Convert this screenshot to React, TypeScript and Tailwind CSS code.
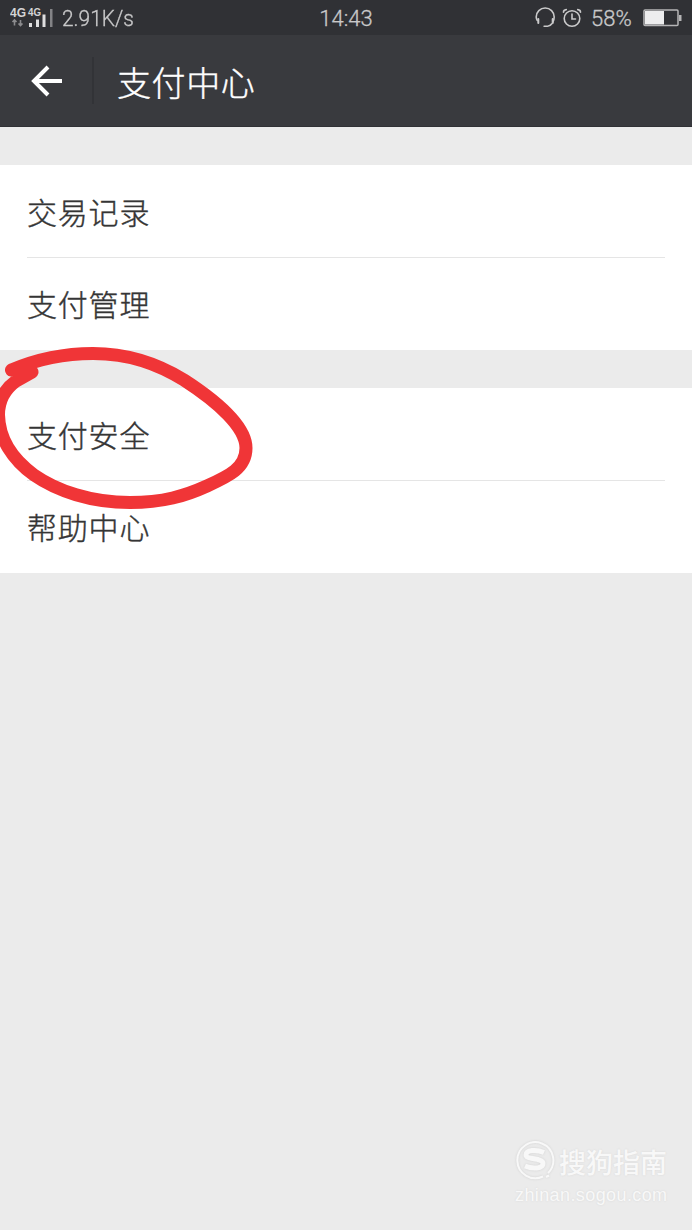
function StatusBar() {
  return (
    <div className="flex h-[35px] shrink-0 items-center bg-[#303135] text-[#c9c9ca]">
      <div className="flex w-[231px] items-center pl-[10px]">
        <svg width="44" height="24" viewBox="0 0 44 24" className="mt-[1px]">
          <g fill="#d4d4d5" fontFamily="Liberation Sans" fontWeight="700">
            <text x="0" y="11" fontSize="12.500" textLength="16" lengthAdjust="spacingAndGlyphs">4G</text>
            <text x="18" y="10" fontSize="10" textLength="13" lengthAdjust="spacingAndGlyphs">4G</text>
          </g>
          <path d="M4.500 19.500v-5M2.500 16l2-2 2 2M10.500 14v5M8.500 17.500l2 2 2-2" stroke="#8b8b8e" strokeWidth="1.600" fill="none" />
          <path d="M19 17h3v4h-3zM26 13.500h3v7.500h-3zM32.500 8.500h3v12.500h-3z" fill="#dededf" />
          <path d="M40 3h2.500v18h-2.500z" fill="#838386" />
        </svg>
        <span className="ml-[8px] mt-[2px] w-[72px] whitespace-nowrap font-['Roboto'] text-[22px] font-light leading-none [-webkit-text-stroke:0.3px]">
          <span className="inline-block origin-left scale-x-[0.95]">2.91K/s</span>
        </span>
      </div>
      <div className="w-[230px] pt-[2px] text-center font-['Roboto'] text-[22px] font-light leading-none [-webkit-text-stroke:0.3px]">
        14:43
      </div>
      <div className="flex flex-1 items-center pl-[73px]">
        <svg width="23" height="22" viewBox="0 0 23 22" fill="none" stroke="#c9c9ca" strokeWidth="1.600" strokeLinecap="round">
          <path d="M3.200 13.500A9 9 0 0 1 2.200 10a9 9 0 0 1 18 0c0 2-.6 3.700-1.400 5.100M17.800 16.800c-1.200 1.700-2.400 2.500-4.200 2.500h-3.500" />
          <path d="M4.300 12v4M18.700 12v4" strokeWidth="2" />
        </svg>
        <svg width="20" height="20" viewBox="0 0 20 20" fill="none" stroke="#c9c9ca" strokeWidth="1.600" strokeLinecap="round" className="ml-[5px]">
          <circle cx="10" cy="10.500" r="7.800" />
          <path d="M10 6v5h3.500M1.500 4.200Q1.500 2 4.300 1.600M18.500 4.200Q18.500 2 15.700 1.600" />
        </svg>
        <span className="ml-[9px] mt-[2px] w-[43px] font-['Roboto'] text-[22px] font-light leading-none [-webkit-text-stroke:0.3px]">58%</span>
        <svg width="40" height="18" viewBox="0 0 40 18" className="ml-[9px]">
          <rect x="1" y="1" width="34" height="15.500" rx="1" fill="none" stroke="#b5b5b6" strokeWidth="1.500" />
          <path d="M2 2h19v13.500H2z" fill="#ededee" />
          <path d="M36 6h2.500v6H36z" fill="#b5b5b6" />
        </svg>
      </div>
    </div>
  );
}

function Group({ items }: { items: string[] }) {
  return (
    <section className="flex h-[185px] shrink-0 flex-col bg-white px-[27px]">
      {items.map((item, i) => (
        <div
          key={item}
          className={
            i === 0
              ? "flex h-[93px] items-center border-b border-[#e5e5e5]"
              : "flex h-[92px] items-center pb-[2px]"
          }
        >
          <span className="text-[30px] leading-none tracking-[0.8px] text-[#353535] [-webkit-text-stroke:0.4px]">{item}</span>
        </div>
      ))}
    </section>
  );
}

export default function App() {
  return (
    <main className="relative flex h-[1230px] w-[692px] flex-col overflow-hidden bg-[#ebebeb] font-['Noto_Sans_CJK_SC',sans-serif] font-light">
      <StatusBar />
      <header className="flex h-[92px] shrink-0 items-center border-b border-[#303135] bg-[#393a3e]">
        <svg width="32" height="32" viewBox="0 0 32 32" className="ml-[31px]" fill="none" stroke="#fff" strokeWidth="4">
          <path d="M17 2L3 16l14 14M3 16h28" />
        </svg>
        <div className="ml-[29px] h-[47px] w-[2px] bg-[#323337]" />
        <h1 className="ml-[23px] mt-[2px] text-[34px] leading-none tracking-[0.6px] text-white [-webkit-text-stroke:0.4px]">支付中心</h1>
      </header>
      <div className="mt-[38px] flex flex-col gap-[38px]">
        <Group items={["交易记录", "支付管理"]} />
        <Group items={["支付安全", "帮助中心"]} />
      </div>

      <svg className="absolute left-0 top-[335px]" width="270" height="190" viewBox="0 335 270 190" fill="none" stroke="#f03537" strokeWidth="13" strokeLinecap="round" strokeLinejoin="round">
        <path d="M11.500 370C35 360 64 353.500 93 353.500C130 353.500 158 364 184 380C218 402 246 427 246 448C246 468 229 476 207 486C185 496 163 502.500 130 502.500C91 502.500 57 491 34 475C12 459 -1 438 -1.500 415C-1.500 400 5 389 16 381L32 372L11.500 370" />
      </svg>

      <footer className="mb-[24px] ml-[515px] mt-auto text-[#f8f8f8] [text-shadow:0_0_2px_#d5d5d5]">
        <div className="flex items-center">
          <svg width="40" height="40" viewBox="0 0 40 40" fill="none" stroke="#f8f8f8" className="drop-shadow-[0_0_1px_#d0d0d0]">
            <path d="M33 33A18 18 0 1 0 28 36.500M31 37l3-1.500" strokeWidth="2" />
            <path d="M29 12.500C21 9 11 10 11 15C11 20 28 17.500 28 23.500C28 29 17 29 10 26" strokeWidth="5" />
          </svg>
          <span className="mt-[3px] ml-[4px] text-[27px] font-medium leading-none">搜狗指南</span>
        </div>
        <div className="mt-[4px] font-['Liberation_Sans'] text-[18px] font-normal leading-[22px] tracking-[0.4px]">zhinan.sogou.com</div>
      </footer>
    </main>
  );
}
